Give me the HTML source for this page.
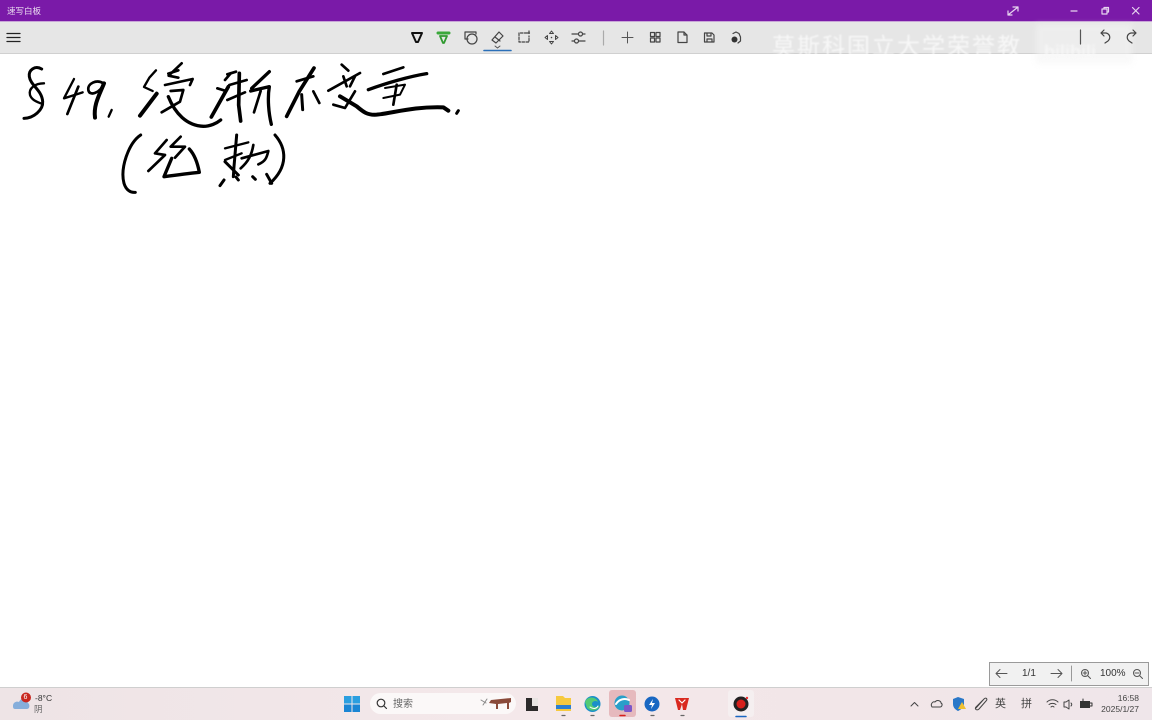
<!DOCTYPE html>
<html lang="zh"><head><meta charset="utf-8"><title>速写白板</title>
<style>
html,body{margin:0;padding:0;width:1152px;height:720px;overflow:hidden;background:#fff;font-family:"Liberation Sans","Noto Sans CJK SC",sans-serif;color:#222}
#root{position:absolute;left:0;top:0;width:1152px;height:720px;overflow:hidden;filter:blur(.35px)}
.a{position:absolute;white-space:nowrap}
svg{position:absolute;left:0;top:0;overflow:visible}
</style></head><body><div id="root">
<div class="a" style="left:0;top:0;width:1152px;height:21px;background:#7a1aa8"></div>
<div class="a" style="left:0;top:21px;width:1152px;height:1px;background:#c9a5d8"></div>
<div class="a" style="left:0;top:22px;width:1152px;height:31px;background:#e6e6e6"></div>
<div class="a" style="left:0;top:53px;width:1152px;height:1px;background:#d0d0d0"></div>
<div class="a" style="left:7px;top:5px;font-size:8.500px;line-height:12px;color:#eadcf0">速写白板</div>
<div class="a" style="left:772px;top:32px;font-size:23px;letter-spacing:2px;line-height:28px;color:#fff;opacity:.7;filter:blur(.8px)">莫斯科国立大学荣誉教</div>
<div class="a" style="left:1036px;top:24px;width:96px;height:40px;background:#f4f4f4;opacity:.55;filter:blur(3px)"></div>
<div class="a" style="left:1044px;top:42px;font-size:18px;font-weight:bold;color:#f9f9f9;line-height:20px;filter:blur(1px);opacity:.8">bilibili</div>
<div class="a" style="left:0;top:688px;width:1152px;height:32px;background:linear-gradient(90deg,#eee4e6,#f4e8ea 45%,#f2e6e8 75%,#efe6ea)"></div>
<div class="a" style="left:0;top:687px;width:1152px;height:1px;background:#cfcfcf"></div>
<div class="a" style="left:370px;top:693px;width:146px;height:21px;border-radius:11px;background:#fbf8f8"></div>
<div class="a" style="left:609px;top:690px;width:27px;height:27px;border-radius:3px;background:#e6b9bd"></div>
<div class="a" style="left:728px;top:690px;width:26px;height:27px;border-radius:3px;background:#f5eff0"></div>
<div class="a" style="left:989px;top:662px;width:158px;height:22px;background:#f1f1f1;border:1px solid #9a9a9a"></div>
<svg width="1152" height="720" viewBox="0 0 1152 720" fill="none" stroke-linecap="round" stroke-linejoin="round">
<!-- handwriting: § 49. 浸 -->
<g transform="translate(0 55) scale(.33333)" stroke="#000" stroke-width="9">
<path d="M125 42C105 30 85 45 88 65C92 92 126 105 128 140C130 165 100 190 72 190"/>
<path d="M132 85C105 85 85 100 90 120C95 135 110 140 122 145" stroke-width="7"/>
<path d="M222 72L192 130L248 112" stroke-width="7"/><path d="M235 95L202 177" stroke-width="8"/>
<path d="M310 85C290 72 262 85 265 105C268 125 300 115 312 85" stroke-width="8"/>
<path d="M312 85C298 120 280 150 285 188" stroke-width="12"/>
<path d="M335 165L326 185" stroke-width="7"/>
<path d="M468 46L448 68L432 96L458 108" stroke-width="7"/><path d="M470 116L420 182" stroke-width="12"/>
<path d="M545 25L506 62L535 68M505 56L535 46M495 90L578 72L570 90" stroke-width="8"/>
<path d="M512 108L550 105L540 140L485 172" stroke-width="8"/>
<path d="M505 125C525 175 560 212 610 214C630 214 650 205 662 195" stroke-width="10"/>
<path d="M692 55L675 75M652 100L678 108" stroke-width="8"/><path d="M685 95L634 186" stroke-width="11"/>
<path d="M422 240C385 265 360 340 372 385C378 405 392 414 406 412" stroke-width="9"/>
</g>
<!-- handwriting: 渐 -->
<g transform="translate(230 55) scale(.33333)" stroke="#000" stroke-width="9">
<path d="M-8 58L18 50M-2 90L50 75M-8 135L45 112" stroke-width="8"/>
<path d="M28 55L26 150L32 198" stroke-width="11"/>
<path d="M118 50L65 100" stroke-width="10"/><path d="M62 108L118 95C112 130 116 175 124 208" stroke-width="10"/><path d="M92 108L72 172" stroke-width="8"/>
</g>
<!-- handwriting: 不变量 -->
<g transform="translate(280 58) scale(.33333)" stroke="#000" stroke-width="9">
<path d="M102 30L58 100L20 175" stroke-width="11"/><path d="M50 70L100 55" stroke-width="8"/><path d="M65 110L68 155" stroke-width="9"/><path d="M100 100L118 135" stroke-width="8"/>
<path d="M185 20L205 38M145 98L240 45M190 55L200 85M225 55L210 85M160 140L195 150L225 100" stroke-width="8"/>
<path d="M180 115L230 145C250 162 262 172 290 170C340 165 400 145 490 148L505 158" stroke-width="12"/>
<path d="M310 48L370 28" stroke-width="8"/><path d="M265 95C320 75 390 55 440 47" stroke-width="10"/>
<path d="M315 90L375 80L360 110L310 120" stroke-width="6"/><path d="M350 80L340 140" stroke-width="8"/>
<path d="M535 158L530 166" stroke-width="9"/>
</g>
<!-- handwriting: 绝热 -->
<g transform="translate(110 125) scale(.33333)" stroke="#000" stroke-width="9">
<path d="M170 45L135 85L165 90L115 138" stroke-width="8"/>
<path d="M212 35L182 65L225 65L195 98" stroke-width="8"/>
<path d="M185 100L162 155C200 150 240 145 268 142C262 110 250 85 238 72" stroke-width="10"/>
<path d="M345 70L415 52M345 105L395 85" stroke-width="7"/><path d="M380 30L372 125L370 155" stroke-width="9"/><path d="M345 110L385 150" stroke-width="9"/>
<path d="M395 100L475 78C470 100 465 110 445 118M430 60C425 90 415 110 392 130" stroke-width="8"/>
<path d="M342 165L330 182M378 156L385 165M428 155L436 163M470 148L485 175" stroke-width="9"/>
<path d="M495 30C530 70 535 125 480 175" stroke-width="9"/>
</g>
<!-- toolbar icons -->
<g stroke="#222" stroke-width="1.200">
<path d="M7 33.500H20M7 37.500H20M7 41.500H20" stroke-width="1.300"/>
<path d="M412 33H422L418 42H416Z" stroke="#111" stroke-width="2"/>
<path d="M438 33H449" stroke="#3aa83a" stroke-width="3"/><path d="M440 36H447L444 43H443Z" stroke="#2f9a2f" stroke-width="1.800"/>
<path d="M468 39H465V32H476V34" stroke="#444"/><circle cx="472" cy="39" r="5" stroke="#444"/>
<path d="M492 40L499 32L503 36L496 43ZM495 37L500 41" stroke="#444"/><path d="M495 46L497.500 48L500 46" stroke="#555" stroke-width="1"/>
<path d="M484 50.500H511" stroke="#2a6fb8" stroke-width="1.600"/>
<path d="M527 33H519V42H529V36M529 31V35M527 33H531" stroke="#444" stroke-dasharray="2.500 1.500"/>
<path d="M551.500 31L553.500 33.500H549.500ZM551.500 44L549.500 41.500H553.500ZM545 37.500L547.500 35.500V39.500ZM558 37.500L555.500 35.500V39.500Z" stroke="#444" stroke-width="1"/><circle cx="551.500" cy="37.500" r=".8" fill="#444" stroke="none"/>
<path d="M572 34H578M583 34H585M572 41H574M579 41H585" stroke="#444"/><circle cx="580.500" cy="34" r="2" stroke="#444"/><circle cx="576.500" cy="41" r="2" stroke="#444"/>
<path d="M603.500 31V45" stroke="#aaa"/>
<path d="M627.500 32V43M622 37.500H633" stroke="#555" stroke-width="1"/>
<path d="M650.500 32.500H654.500V36.500H650.500ZM656 32.500H660V36.500H656ZM650.500 38H654.500V42H650.500ZM656 38H660V42H656Z" stroke="#444"/>
<path d="M678 32H684L687 35V42.500H678ZM684 32V35H687" stroke="#444"/>
<path d="M704.500 33H712L714 35V42H704.500ZM707 33V36H711V33M707 42V39H712V42" stroke="#444"/>
<path d="M733 33.500L736 32L739 33.500L740.500 37V41L738 43" stroke="#444"/><circle cx="734.500" cy="39.500" r="3" fill="#333" stroke="none"/>
<path d="M1080.500 30V44" stroke="#555"/>
<path d="M1101 33L1104 36M1101 33L1104 30M1101 33H1106C1110 34 1111 38 1108 41L1105 43" stroke="#444"/>
<path d="M1136 33L1133 36M1136 33L1133 30M1136 33H1131C1127 34 1126 38 1129 41L1132 43" stroke="#444"/>
<path d="M1008 15L1018 7M1013 7H1018V11M1008 11V15H1012" stroke="#e6d4ef"/>
<path d="M1071 11H1077" stroke="#e6d4ef"/>
<path d="M1102 9H1107V14H1102ZM1104 9V7.500H1108.500V12H1107" stroke="#e6d4ef"/>
<path d="M1132.500 7.500L1139 14M1139 7.500L1132.500 14" stroke="#e6d4ef"/>
</g>
<!-- page nav -->
<g stroke="#555" stroke-width="1">
<path d="M996 673.500H1007M996 673.500L1000 669.500M996 673.500L1000 677.500"/>
<path d="M1051 673.500H1062M1062 673.500L1058 669.500M1062 673.500L1058 677.500"/>
<path d="M1071.500 666V681" stroke="#999"/>
<circle cx="1085" cy="673" r="3.500"/><path d="M1088 676L1090.500 678.500M1083 673H1087M1085 671V675"/>
<circle cx="1137" cy="673" r="3.500"/><path d="M1140 676L1142.500 678.500M1135 673H1139"/>
</g>
<!-- taskbar -->
<path d="M13 706C13 702 17 701 19 702C21 697 27 698 28 703C30 704 30 709 27 709H15C13 709 13 707 13 706Z" fill="#86aedb"/>
<circle cx="26" cy="697.500" r="5" fill="#c8271f"/>
<g>
<rect x="344" y="696" width="7.500" height="7.500" fill="#2b9fe0"/><rect x="352.500" y="696" width="7.500" height="7.500" fill="#2b9fe0"/><rect x="344" y="704.500" width="7.500" height="7.500" fill="#1b86d4"/><rect x="352.500" y="704.500" width="7.500" height="7.500" fill="#1b86d4"/>
<circle cx="381" cy="703" r="3.800" stroke="#333" stroke-width="1.200"/><path d="M384 706L386.500 708.500" stroke="#333" stroke-width="1.200"/>
<path d="M491 700L511 698V702L509 703V709H507V703L498 704V709H496V704L489 703Z" fill="#8a4a3a"/><path d="M481 700L486 703M483 705L487 699" stroke="#888" stroke-width="1"/>
<rect x="526" y="698" width="12" height="13" fill="#e8e4e2"/><path d="M526 698H532V706H538V711H526Z" fill="#2c2a2a"/>
<path d="M556 696H563L565 698H571V711H556Z" fill="#f6c93f"/><rect x="556" y="705" width="15" height="4" fill="#2d7fd0"/>
<circle cx="592.500" cy="704" r="8" fill="#1b8fc9"/><path d="M587 708C591 712 598 711 600 706C596 708 592 707 592 704C592 701 596 700 598 702C596 696 587 696 585 702" fill="#5ad06c" opacity=".9"/><path d="M590 707C594 710 597 708 598 706" stroke="#fff" stroke-width="1"/>
<circle cx="622" cy="703" r="7.500" fill="#2a9fc9"/><path d="M616 704C619 699 625 698 629 700" stroke="#fff" stroke-width="2"/><rect x="624" y="705" width="8" height="7" rx="1.500" fill="#7a57c8"/>
<circle cx="652" cy="704" r="7.500" fill="#1967c2"/><path d="M653 699L649 705H652L651 709L655 703H652Z" fill="#fff"/>
<path d="M675 698H689L686 710H683L682 704L680 710H678Z" fill="#d9291f"/><path d="M679 700L682 703L685 700" stroke="#fff" stroke-width="1.200"/>
<circle cx="741" cy="704" r="7.500" fill="#222"/><circle cx="741" cy="704" r="4.500" fill="#d6201c"/><circle cx="747" cy="698" r="1.200" fill="#e33"/>
<path d="M736 716.500H746" stroke="#1967c2" stroke-width="1.500"/>
<path d="M620 715.500H625" stroke="#d6201c" stroke-width="1.500"/>
<path d="M562 715.500H565M591 715.500H594M651 715.500H654M681 715.500H684" stroke="#666" stroke-width="1.200"/>
</g>
<g stroke="#444" stroke-width="1">
<path d="M911 706L914.500 702.500L918 706"/>
<path d="M932 707C930 704 933 701 935 702C937 699 941 701 941 703C943 704 942 707 940 707Z"/>
<path d="M953 699L958 697L964 699V704C964 708 960 710 958 711C956 710 953 708 953 704Z" fill="#2a78c8" stroke="none"/><path d="M962 702L966 709H958Z" fill="#f0c030" stroke="none"/>
<path d="M976 708L984 699C986 697 988 699 986 701L979 709C977 711 974 709 976 707L983 700"/>
<path d="M1047 702C1050 699 1055 699 1058 702M1049 704.500C1051 703 1054 703 1056 704.500M1051 707C1052 706 1053 706 1054 707"/>
<path d="M1064 702H1066L1069 700V709L1066 707H1064ZM1071 703C1072 704 1072 705 1071 706"/>
<rect x="1080" y="701" width="10" height="7" fill="#333" stroke="none"/><path d="M1090 703H1092V706H1090M1083 699V701" stroke="#333"/>
</g>
</svg>
<div class="a" style="left:1022px;top:667px;font-size:10px;line-height:14px;color:#333">1/1</div>
<div class="a" style="left:1100px;top:667px;font-size:10px;line-height:14px;color:#333">100%</div>
<div class="a" style="left:35px;top:693px;font-size:8.500px;line-height:11px;color:#333">-8°C</div>
<div class="a" style="left:34px;top:704px;font-size:8.500px;line-height:11px;color:#666">阴</div>
<div class="a" style="left:23.500px;top:693px;font-size:7px;line-height:9px;color:#fff">6</div>
<div class="a" style="left:393px;top:698px;font-size:10px;line-height:13px;color:#666">搜索</div>
<div class="a" style="left:995px;top:697px;font-size:11px;line-height:14px;color:#444">英</div>
<div class="a" style="left:1021px;top:697px;font-size:11px;line-height:14px;color:#444">拼</div>
<div class="a" style="left:1090px;top:693px;width:49px;text-align:right;font-size:8.500px;line-height:11px;color:#444">16:58</div>
<div class="a" style="left:1090px;top:704px;width:49px;text-align:right;font-size:8.500px;line-height:11px;color:#444">2025/1/27</div>
</div></body></html>
